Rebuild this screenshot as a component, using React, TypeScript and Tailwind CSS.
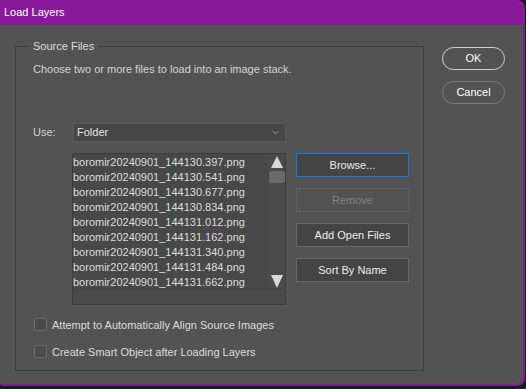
import React from 'react';
import { ChevronDown } from 'lucide-react';

// Files currently visible in the source stack list
const FILES = [
    'boromir20240901_144130.397.png',
    'boromir20240901_144130.541.png',
    'boromir20240901_144130.677.png',
    'boromir20240901_144130.834.png',
    'boromir20240901_144131.012.png',
    'boromir20240901_144131.162.png',
    'boromir20240901_144131.340.png',
    'boromir20240901_144131.484.png',
    'boromir20240901_144131.662.png',
];

const font = { fontFamily: '"Liberation Sans", Arial, sans-serif' };

const SideButton: React.FC<{ label: string; focused?: boolean; disabled?: boolean }> = ({ label, focused, disabled }) => (
    <button
        className={
            'w-[113px] h-[24px] flex items-center justify-center text-[11px] border ' +
            (focused
                ? 'bg-[#444444] border-[#1f72e6] text-[#ececec]'
                : disabled
                ? 'bg-[#535353] border-[#5f5f5f] text-[#828282]'
                : 'bg-[#444444] border-[#666666] text-[#ececec]')
        }
    >
        {label}
    </button>
);

const CheckRow: React.FC<{ label: string }> = ({ label }) => (
    <div className="flex items-center h-[13px] pl-[1px]">
        <span className="w-[13px] h-[13px] rounded-[2px] border border-[#6c6c6c] bg-[#4b4b4b] shrink-0" />
        <span className="ml-[5px] text-[11px] leading-[14px] text-[#dcdcdc]">{label}</span>
    </div>
);

export default function App() {
    return (
        <div className="w-[526px] h-[389px] bg-[#13201f] overflow-hidden" style={font}>
            <div className="w-[525px] h-[386px] bg-[#535353] border-r-2 border-b-2 border-[#88199a] rounded-tr-[8px] rounded-br-[8px] rounded-bl-[3px] overflow-hidden flex flex-col">
                {/* Title Bar */}
                <div className="h-[25px] bg-[#88199a] flex items-center pl-[4px] shrink-0">
                    <span className="text-white text-[11px] leading-none">Load Layers</span>
                </div>

                <div className="flex pl-[15px] pt-[21px]">
                    {/* Source Files group */}
                    <div className="relative w-[409px] border border-[#3d3d3d] pl-[17px] pt-[14px] pb-[12px]">
                        <span className="absolute left-[13px] top-[-8px] px-[4px] bg-[#535353] text-[11px] leading-[14px] text-[#dcdcdc]">
                            Source Files
                        </span>
                        <p className="text-[11px] leading-[16px] text-[#d4d4d4]">
                            Choose two or more files to load into an image stack.
                        </p>

                        <div className="flex items-center mt-[46px]">
                            <span className="w-[40px] text-[11px] text-[#d4d4d4]">Use:</span>
                            <div className="w-[213px] h-[19px] bg-[#464646] border border-[#5a5a5a] flex items-center justify-between pl-[3px] pr-[4px]">
                                <span className="text-[11px] text-[#e4e4e4]">Folder</span>
                                <ChevronDown size={11} strokeWidth={1.5} color="#bdbdbd" />
                            </div>
                        </div>

                        <div className="flex mt-[11px] ml-[39px]">
                            {/* File list */}
                            <div className="w-[214px] h-[152px] bg-[#484848] border border-[#3c3c3c] flex flex-col">
                                <div className="flex h-[134px]">
                                    <div className="flex-1 overflow-hidden pt-[1px]">
                                        {FILES.map((f) => (
                                            <div key={f} className="h-[15px] leading-[15px] text-[11px] text-[#dcdcdc] whitespace-nowrap">
                                                {f}
                                            </div>
                                        ))}
                                    </div>
                                    <div className="w-[17px] bg-[#4a4a4a] flex flex-col items-center pt-[2px]">
                                        <svg width="12" height="12" viewBox="0 0 12 12">
                                            <polygon points="6,0 12,12 0,12" fill="#d8d8d8" />
                                        </svg>
                                        <span className="mt-[3px] w-[16px] h-[12px] rounded-[3px] bg-[#6a6a6a]" />
                                        <div className="flex-1" />
                                        <svg width="12" height="13" viewBox="0 0 12 13">
                                            <polygon points="0,0 12,0 6,13" fill="#d8d8d8" />
                                        </svg>
                                    </div>
                                </div>
                                <div className="flex-1 bg-[#4a4a4a] border-t border-[#444444]" />
                            </div>

                            {/* Side buttons */}
                            <div className="flex flex-col gap-[11px] ml-[10px]">
                                <SideButton label="Browse..." focused />
                                <SideButton label="Remove" disabled />
                                <SideButton label="Add Open Files" />
                                <SideButton label="Sort By Name" />
                            </div>
                        </div>

                        <div className="flex flex-col gap-[14px] mt-[13px]">
                            <CheckRow label="Attempt to Automatically Align Source Images" />
                            <CheckRow label="Create Smart Object after Loading Layers" />
                        </div>
                    </div>

                    {/* OK / Cancel */}
                    <div className="flex flex-col gap-[11px] ml-[18px] mt-[1px]">
                        <button className="w-[63px] h-[23px] rounded-full border-[1.5px] border-[#cfcfcf] text-[11px] text-white">
                            OK
                        </button>
                        <button className="w-[63px] h-[23px] rounded-full border-[1.5px] border-[#7a7a7a] text-[11px] text-white">
                            Cancel
                        </button>
                    </div>
                </div>
            </div>
        </div>
    );
}
